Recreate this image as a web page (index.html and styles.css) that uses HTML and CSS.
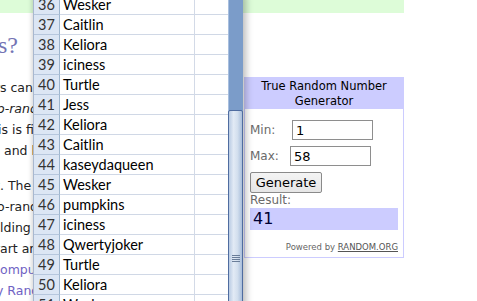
FILE: index.html
```html
<!DOCTYPE html>
<html lang="en">
<head>
    <meta charset="UTF-8">
    <meta name="viewport" content="width=device-width, initial-scale=1.0">
    <title>True Random Number Generator</title>
    <link rel="stylesheet" href="styles.css">
</head>
<body>
 <div class="page">
    <div class="topbar"></div>
    <div class="content">
        <div class="article">
            <h2 class="title"><span>What's this fuss about true randomness?</span></h2>
            <div class="para">
                <div class="ln"><span class="pre"><span>predictable machines like computer</span></span>s can generate randomness.</div>
                <div class="ln em shift-3"><span class="pre"><span>most random numbers used are pseud</span></span>o-random, which means</div>
                <div class="ln shift8"><span class="pre"><span>formula. This</span></span>&nbsp;is fine for many purposes</div>
                <div class="ln"><span class="pre"><span>if you're used to dice rolls</span></span>&nbsp;and lottery drawings.</div>
            </div>
            <div class="para">
                <div class="ln"><span class="pre"><span>random numbers to anyone on the Internet</span></span>. The randomness</div>
                <div class="ln shift-3"><span class="pre"><span>better than the pseud</span></span>o-random number</div>
                <div class="ln"><span class="pre"><span>People use RANDOM.ORG for ho</span></span>lding drawings</div>
                <div class="ln"><span class="pre"><span>applications and for</span></span>art and music.</div>
                <div class="ln link"><span class="pre"><span>School of C</span></span>omputer Science</div>
                <div class="ln link shift-4"><span class="pre"><span>RANDOM.ORG is operated b</span></span>y Randomness</div>
            </div>
        </div>

        <div class="trng">
            <div class="trng-head">True Random Number Generator</div>
            <div class="trng-body">
                <div class="field"><label>Min:</label><input class="num" value="1"></div>
                <div class="field"><label>Max:</label><input class="num max" value="58"></div>
                <button class="gen">Generate</button>
                <div class="res-label">Result:</div>
                <div class="result">41</div>
                <div class="powered">Powered by <a href="#">RANDOM.ORG</a></div>
            </div>
        </div>
    </div>
 </div>

 <!-- spreadsheet window lying over the page -->
 <div class="sheet">
    <div class="rows">
        <div class="row"><div class="rownum">36</div><div class="cell">Wesker</div><div class="cell"></div></div>
        <div class="row"><div class="rownum">37</div><div class="cell">Caitlin</div><div class="cell"></div></div>
        <div class="row"><div class="rownum">38</div><div class="cell">Keliora</div><div class="cell"></div></div>
        <div class="row"><div class="rownum">39</div><div class="cell">iciness</div><div class="cell"></div></div>
        <div class="row"><div class="rownum">40</div><div class="cell">Turtle</div><div class="cell"></div></div>
        <div class="row"><div class="rownum">41</div><div class="cell">Jess</div><div class="cell"></div></div>
        <div class="row"><div class="rownum">42</div><div class="cell">Keliora</div><div class="cell"></div></div>
        <div class="row"><div class="rownum">43</div><div class="cell">Caitlin</div><div class="cell"></div></div>
        <div class="row"><div class="rownum">44</div><div class="cell">kaseydaqueen</div><div class="cell"></div></div>
        <div class="row"><div class="rownum">45</div><div class="cell">Wesker</div><div class="cell"></div></div>
        <div class="row"><div class="rownum">46</div><div class="cell">pumpkins</div><div class="cell"></div></div>
        <div class="row"><div class="rownum">47</div><div class="cell">iciness</div><div class="cell"></div></div>
        <div class="row"><div class="rownum">48</div><div class="cell">Qwertyjoker</div><div class="cell"></div></div>
        <div class="row"><div class="rownum">49</div><div class="cell">Turtle</div><div class="cell"></div></div>
        <div class="row"><div class="rownum">50</div><div class="cell">Keliora</div><div class="cell"></div></div>
        <div class="row"><div class="rownum">51</div><div class="cell">Wesker</div><div class="cell"></div></div>
    </div>
    <div class="vscroll">
        <div class="track"></div>
        <div class="thumb"><div class="grip"></div></div>
    </div>
 </div>
</body>
</html>
```

FILE: styles.css
```css
*{
    margin: 0;
    padding: 0;
    box-sizing: border-box;
}
body{
    width: 477px;
    height: 301px;
    overflow: hidden;
    position: relative;
    background: #fff;
    font-family: "DejaVu Sans", Verdana, sans-serif;
    color: #222;
}

/* page behind the spreadsheet */
.topbar{
    width: 404px;
    height: 13px;
    background-color: #ddfcd8;
}
.content{
    display: flex;
}
.article{
    width: 244px;
    overflow: hidden;
}
.title{
    display: flex;
    justify-content: flex-end;
    width: 18px;
    white-space: nowrap;
    margin-top: 18px;
    font-family: "Liberation Serif", serif;
    font-weight: normal;
    font-size: 24px;
    line-height: 28px;
    color: #7474b4;
}
.para{
    font-size: 12.5px;
    margin-top: 18px;
}
.para + .para{
    margin-top: 14px;
}
.ln{
    display: flex;
    white-space: nowrap;
    height: 21px;
    line-height: 21px;
}
.pre{
    display: flex;
    justify-content: flex-end;
    flex: none;
    width: 0;
}
.ln.em{
    font-style: italic;
}
.ln.link{
    color: #6f62c4;
}
.shift8{
    padding-left: 8px;
}
.shift-3{
    margin-left: -3px;
}
.shift-4{
    margin-left: -4px;
}

/* random.org widget */
.trng{
    width: 160px;
    margin-top: 64px;
    height: 181px;
    border: 1px solid #ccccff;
    border-top: 0;
    font-size: 12px;
}
.trng-head{
    background-color: #ccccff;
    text-align: center;
    font-size: 11.5px;
    line-height: 15px;
    padding-top: 2px;
    height: 32px;
    color: #000;
}
.trng-body{
    padding: 11px 0 0 5px;
}
.field{
    display: flex;
    align-items: center;
    height: 20px;
    margin-bottom: 6px;
}
.field label{
    width: 42px;
    color: #6a6a6a;
}
.num{
    width: 81px;
    height: 20px;
    border: 1px solid #8e8e8e;
    font-family: "DejaVu Sans", Verdana, sans-serif;
    font-size: 13px;
    padding-left: 3px;
    color: #000;
}
.num.max{
    margin-left: -2px;
}
.gen{
    width: 72px;
    height: 21px;
    border: 1px solid #8a8a8a;
    border-radius: 2px;
    background: linear-gradient(#f4f4f4, #e6e6e6);
    font-family: "DejaVu Sans", Verdana, sans-serif;
    font-size: 13px;
    color: #000;
}
.res-label{
    color: #6a6a6a;
    line-height: 15px;
}
.result{
    width: 148px;
    height: 22px;
    background-color: #ccccff;
    font-size: 16px;
    line-height: 22px;
    padding-left: 3px;
    color: #000033;
}
.powered{
    width: 148px;
    text-align: right;
    font-size: 8.5px;
    margin-top: 12px;
    color: #666;
}
.powered a{
    color: #555;
}

/* spreadsheet window */
.sheet{
    position: absolute;
    left: 33px;
    top: -5px;
    height: 320px;
    display: flex;
    background: #fff;
    border-left: 1px solid #a9b8cf;
    box-shadow: 4px 0 6px rgba(0,0,0,0.22), -2px 0 4px rgba(0,0,0,0.12);
    font-family: Lato, "Open Sans", sans-serif;
    font-size: 14.5px;
    color: #000;
}
.rows{
    width: 194px;
}
.row{
    display: grid;
    grid-template-columns: 26px 135px 33px;
    height: 20px;
}
.rownum{
    background-color: #dce6f4;
    border-right: 1px solid #9eb6ce;
    border-bottom: 1px solid #b7c7dd;
    text-align: center;
    line-height: 19px;
    color: #333;
}
.cell{
    border-right: 1px solid #d3dae7;
    border-bottom: 1px solid #d0d8e6;
    padding-left: 3px;
    line-height: 19px;
}
.row .cell:last-child{
    border-right: 0;
}
.vscroll{
    width: 15px;
    display: flex;
    flex-direction: column;
    background-color: #7b9cc9;
    border-left: 1px solid #a8bfdf;
}
.track{
    height: 115px;
    flex: none;
}
.thumb{
    flex: 1;
    margin-left: -1px;
    border: 1px solid #4f6ca0;
    border-radius: 2px;
    background: linear-gradient(to right, #b9cbe3, #e2eaf5 35%, #d3dfee 65%, #a9bedb);
    padding-top: 144px;
}
.grip{
    width: 8px;
    height: 7px;
    margin: 0 auto;
    background: repeating-linear-gradient(#6a7d99 0 1px, transparent 1px 2px);
}
```
